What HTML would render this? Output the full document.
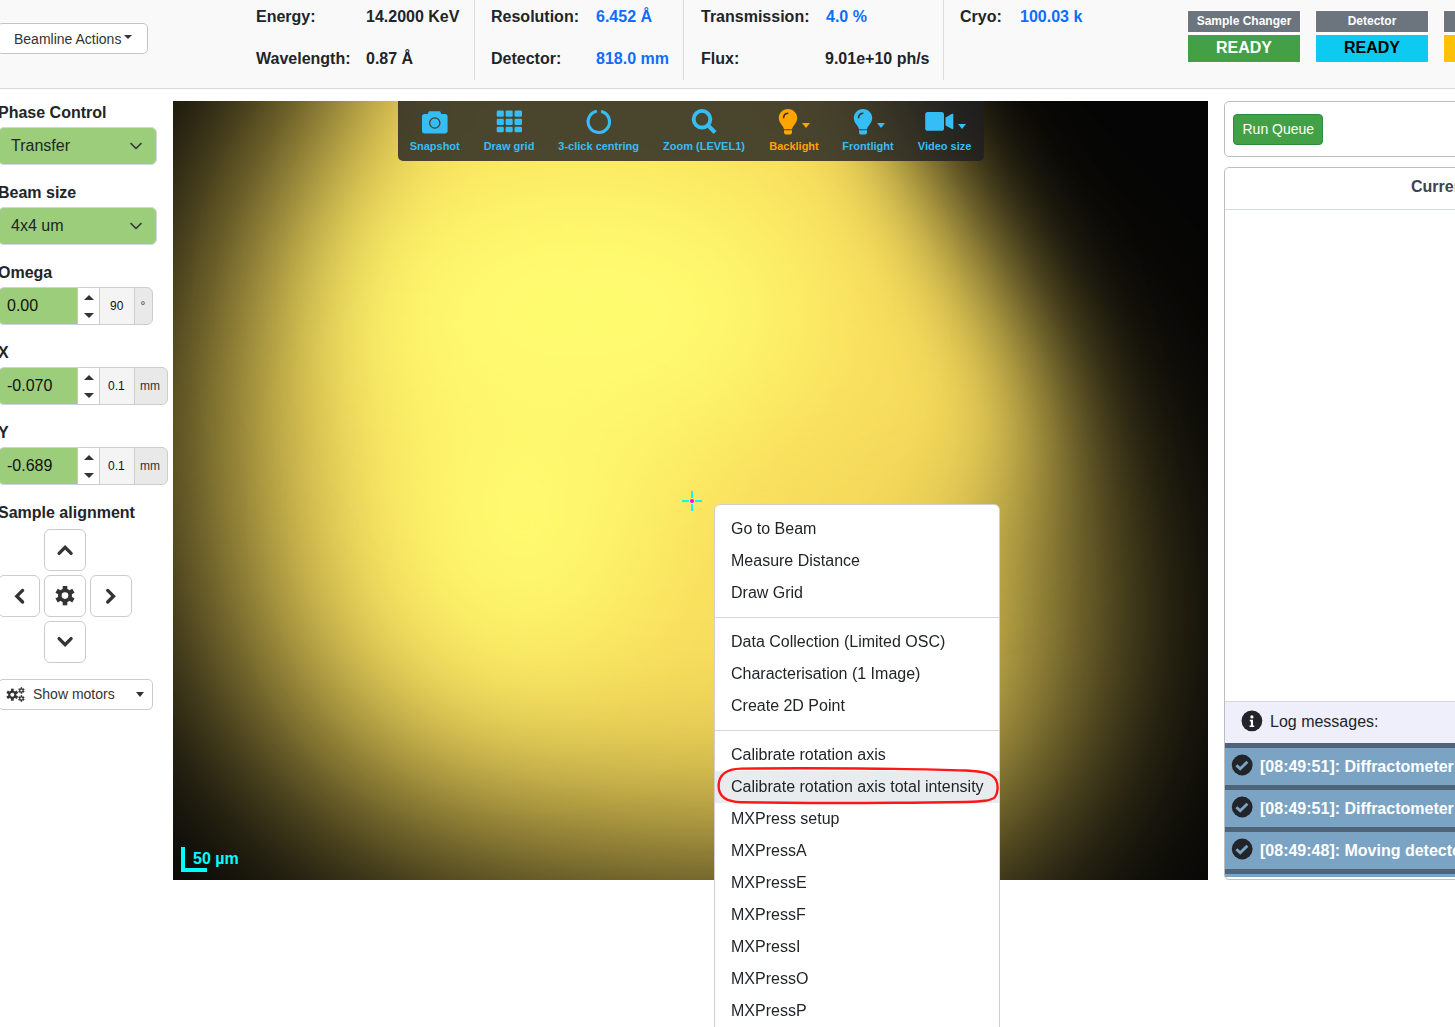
<!DOCTYPE html>
<html><head><meta charset="utf-8">
<style>
*{box-sizing:border-box;margin:0;padding:0}
html,body{width:1455px;height:1027px;overflow:hidden;background:#fff}
body{position:relative;font-family:"Liberation Sans",sans-serif;color:#212529}
.a{position:absolute}
.t{position:absolute;white-space:nowrap;line-height:1}
.b{font-weight:bold}
.blue{color:#0d6efd}
#hdr{left:0;top:0;width:1455px;height:89px;background:#f9f9f9;border-bottom:1px solid #d9d9d9}
.vdiv{position:absolute;top:0;width:1px;height:80px;background:#dcdcdc}
.lbl16{font-size:16px;font-weight:bold}
.sel{left:-2px;width:159px;height:38px;background:#9bcd7b;border:1px solid #d3d6dc;border-radius:6px}
.ig{left:-2px;height:38px;border-radius:6px}
.igin{left:-2px;width:80px;height:38px;background:#9bcd7b;border:1px solid #cfd2da;border-right-color:#c8c8c8;border-radius:6px 0 0 6px}
.spin{left:78px;width:22px;height:38px;background:#fff;border-top:1px solid #cdcdcd;border-bottom:1px solid #cdcdcd;border-right:1px solid #cdcdcd}
.step{left:99px;width:36px;height:38px;background:#f4f4f4;border:1px solid #cdcdcd}
.unit{left:134px;height:38px;background:#e9e9e9;border:1px solid #cdcdcd;border-radius:0 6px 6px 0}
.up{width:0;height:0;border-bottom:5px solid #333;border-left:5px solid transparent;border-right:5px solid transparent}
.dn{width:0;height:0;border-top:5px solid #333;border-left:5px solid transparent;border-right:5px solid transparent}
.abtn{width:42px;height:42px;border:1px solid #ccc;border-radius:6px;background:#fff}
.tbl{top:141px;width:100px;text-align:center;font-size:11px;color:#35bef6}
.logi{left:0;width:260px;height:42px;background:#7ba3c4;border-top:5px solid #4f6478}
.mi{left:731px;font-size:16px;color:#212529}
</style></head><body>
<!-- HEADER -->
<div id="hdr" class="a"></div>
<div class="a" style="left:-3px;top:23px;width:151px;height:31px;border:1px solid #c4c4c4;border-radius:5px;background:#fff"></div>
<div class="t" style="left:14px;top:32px;font-size:14px;color:#333">Beamline Actions</div>
<div class="a" style="left:124px;top:35px;width:0;height:0;border-top:4px solid #333;border-left:4px solid transparent;border-right:4px solid transparent"></div>

<div class="t lbl16" style="left:256px;top:9px">Energy:</div>
<div class="t lbl16" style="left:366px;top:9px">14.2000 KeV</div>
<div class="t lbl16" style="left:256px;top:51px">Wavelength:</div>
<div class="t lbl16" style="left:366px;top:51px">0.87 Å</div>
<div class="vdiv" style="left:474px"></div>
<div class="t lbl16" style="left:491px;top:9px">Resolution:</div>
<div class="t lbl16 blue" style="left:596px;top:9px">6.452 Å</div>
<div class="t lbl16" style="left:491px;top:51px">Detector:</div>
<div class="t lbl16 blue" style="left:596px;top:51px">818.0 mm</div>
<div class="vdiv" style="left:683px"></div>
<div class="t lbl16" style="left:701px;top:9px">Transmission:</div>
<div class="t lbl16 blue" style="left:826px;top:9px">4.0 %</div>
<div class="t lbl16" style="left:701px;top:51px">Flux:</div>
<div class="t lbl16" style="left:825px;top:51px">9.01e+10 ph/s</div>
<div class="vdiv" style="left:943px"></div>
<div class="t lbl16" style="left:960px;top:9px">Cryo:</div>
<div class="t lbl16 blue" style="left:1020px;top:9px">100.03 k</div>

<div class="a" style="left:1187px;top:10px;width:114px;height:53px;background:#fff"></div>
<div class="a" style="left:1188px;top:11px;width:112px;height:21px;background:#6c757d"></div>
<div class="t b" style="left:1188px;top:15px;width:112px;text-align:center;font-size:12px;color:#fff">Sample Changer</div>
<div class="a" style="left:1188px;top:35px;width:112px;height:27px;background:#43a047"></div>
<div class="t b" style="left:1188px;top:40px;width:112px;text-align:center;font-size:16px;color:#fff">READY</div>

<div class="a" style="left:1315px;top:10px;width:114px;height:53px;background:#fff"></div>
<div class="a" style="left:1316px;top:11px;width:112px;height:21px;background:#6c757d"></div>
<div class="t b" style="left:1316px;top:15px;width:112px;text-align:center;font-size:12px;color:#fff">Detector</div>
<div class="a" style="left:1316px;top:35px;width:112px;height:27px;background:#0dcaf0"></div>
<div class="t b" style="left:1316px;top:40px;width:112px;text-align:center;font-size:16px;color:#000">READY</div>

<div class="a" style="left:1443px;top:10px;width:20px;height:53px;background:#fff"></div>
<div class="a" style="left:1444px;top:11px;width:20px;height:21px;background:#6c757d"></div>
<div class="a" style="left:1444px;top:35px;width:20px;height:27px;background:#ffc107"></div>

<!-- LEFT PANEL -->
<div class="t lbl16" style="left:-2px;top:105px">Phase Control</div>
<div class="a sel" style="top:127px"></div>
<div class="t" style="left:11px;top:138px;font-size:16px">Transfer</div>
<svg class="a" style="left:128px;top:140px" width="16" height="12" viewBox="0 0 16 12"><path d="M3 3.5l5 5 5-5" fill="none" stroke="#343a40" stroke-width="1.7" stroke-linecap="round" stroke-linejoin="round"/></svg>
<div class="t lbl16" style="left:-2px;top:185px">Beam size</div>
<div class="a sel" style="top:207px"></div>
<div class="t" style="left:11px;top:218px;font-size:16px">4x4 um</div>
<svg class="a" style="left:128px;top:220px" width="16" height="12" viewBox="0 0 16 12"><path d="M3 3.5l5 5 5-5" fill="none" stroke="#343a40" stroke-width="1.7" stroke-linecap="round" stroke-linejoin="round"/></svg>

<div class="t lbl16" style="left:-2px;top:265px">Omega</div>
<div class="a ig" style="top:287px;width:155px"></div>
<div class="a igin" style="top:287px"></div>
<div class="t" style="left:7px;top:298px;font-size:16px;color:#111">0.00</div>
<div class="a spin" style="top:287px"></div>
<div class="a up" style="left:84px;top:295px"></div><div class="a dn" style="left:84px;top:313px"></div>
<div class="a step" style="top:287px"></div>
<div class="t" style="left:110px;top:300px;font-size:12px;color:#111">90</div>
<div class="a unit" style="top:287px;width:19px"></div>
<div class="t" style="left:140.5px;top:300px;font-size:12px;color:#333">°</div>

<div class="t lbl16" style="left:-2px;top:345px">X</div>
<div class="a ig" style="top:367px;width:170px"></div>
<div class="a igin" style="top:367px"></div>
<div class="t" style="left:7px;top:378px;font-size:16px;color:#111">-0.070</div>
<div class="a spin" style="top:367px"></div>
<div class="a up" style="left:84px;top:375px"></div><div class="a dn" style="left:84px;top:393px"></div>
<div class="a step" style="top:367px"></div>
<div class="t" style="left:108px;top:380px;font-size:12px;color:#111">0.1</div>
<div class="a unit" style="top:367px;width:34px"></div>
<div class="t" style="left:140px;top:380px;font-size:12px;color:#333">mm</div>

<div class="t lbl16" style="left:-2px;top:425px">Y</div>
<div class="a ig" style="top:447px;width:170px"></div>
<div class="a igin" style="top:447px"></div>
<div class="t" style="left:7px;top:458px;font-size:16px;color:#111">-0.689</div>
<div class="a spin" style="top:447px"></div>
<div class="a up" style="left:84px;top:455px"></div><div class="a dn" style="left:84px;top:473px"></div>
<div class="a step" style="top:447px"></div>
<div class="t" style="left:108px;top:460px;font-size:12px;color:#111">0.1</div>
<div class="a unit" style="top:447px;width:34px"></div>
<div class="t" style="left:140px;top:460px;font-size:12px;color:#333">mm</div>

<div class="t lbl16" style="left:-2px;top:505px">Sample alignment</div>
<div class="a abtn" style="left:44px;top:529px"></div>
<div class="a abtn" style="left:-2px;top:575px"></div>
<div class="a abtn" style="left:44px;top:575px"></div>
<div class="a abtn" style="left:90px;top:575px"></div>
<div class="a abtn" style="left:44px;top:621px"></div>
<svg class="a" style="left:56px;top:543px" width="18" height="14" viewBox="0 0 18 14"><path d="M3.1 10.4L9.1 4.4 15.1 10.4" fill="none" stroke="#333" stroke-width="3.3" stroke-linecap="round"/></svg>
<svg class="a" style="left:56px;top:635px" width="18" height="14" viewBox="0 0 18 14"><path d="M3.1 3.6L9.1 9.6 15.1 3.6" fill="none" stroke="#333" stroke-width="3.3" stroke-linecap="round"/></svg>
<svg class="a" style="left:12px;top:587px" width="14" height="18" viewBox="0 0 14 18"><path d="M10.6 3.4L4.8 9.2 10.6 15" fill="none" stroke="#333" stroke-width="3.3" stroke-linecap="round"/></svg>
<svg class="a" style="left:104px;top:587px" width="14" height="18" viewBox="0 0 14 18"><path d="M3.7 3.4L9.5 9.2 3.7 15" fill="none" stroke="#333" stroke-width="3.3" stroke-linecap="round"/></svg>
<svg class="a" style="left:55px;top:586px" width="20" height="20" viewBox="0 0 20 20"><circle cx="10" cy="9.6" r="7.0" fill="#333"/><rect x="7.7" y="-0.09999999999999964" width="4.6" height="4.199999999999999" fill="#333" transform="rotate(0 10 9.6)"/><rect x="7.7" y="-0.09999999999999964" width="4.6" height="4.199999999999999" fill="#333" transform="rotate(60 10 9.6)"/><rect x="7.7" y="-0.09999999999999964" width="4.6" height="4.199999999999999" fill="#333" transform="rotate(120 10 9.6)"/><rect x="7.7" y="-0.09999999999999964" width="4.6" height="4.199999999999999" fill="#333" transform="rotate(180 10 9.6)"/><rect x="7.7" y="-0.09999999999999964" width="4.6" height="4.199999999999999" fill="#333" transform="rotate(240 10 9.6)"/><rect x="7.7" y="-0.09999999999999964" width="4.6" height="4.199999999999999" fill="#333" transform="rotate(300 10 9.6)"/><circle cx="10" cy="9.6" r="3.3" fill="#fff"/></svg>

<div class="a" style="left:-2px;top:679px;width:155px;height:31px;border:1px solid #ccc;border-radius:5px;background:#fff"></div>
<svg class="a" style="left:6px;top:687px" width="20" height="16" viewBox="0 0 20 16"><circle cx="6.3" cy="7.7" r="4.0" fill="#333"/><rect x="4.9" y="1.7000000000000002" width="2.8" height="3.5" fill="#333" transform="rotate(0 6.3 7.7)"/><rect x="4.9" y="1.7000000000000002" width="2.8" height="3.5" fill="#333" transform="rotate(60 6.3 7.7)"/><rect x="4.9" y="1.7000000000000002" width="2.8" height="3.5" fill="#333" transform="rotate(120 6.3 7.7)"/><rect x="4.9" y="1.7000000000000002" width="2.8" height="3.5" fill="#333" transform="rotate(180 6.3 7.7)"/><rect x="4.9" y="1.7000000000000002" width="2.8" height="3.5" fill="#333" transform="rotate(240 6.3 7.7)"/><rect x="4.9" y="1.7000000000000002" width="2.8" height="3.5" fill="#333" transform="rotate(300 6.3 7.7)"/><circle cx="6.3" cy="7.7" r="2.0" fill="#fff"/><circle cx="15.4" cy="3.5" r="2.2" fill="#333"/><rect x="14.65" y="0.20000000000000018" width="1.5" height="2.5999999999999996" fill="#333" transform="rotate(0 15.4 3.5)"/><rect x="14.65" y="0.20000000000000018" width="1.5" height="2.5999999999999996" fill="#333" transform="rotate(60 15.4 3.5)"/><rect x="14.65" y="0.20000000000000018" width="1.5" height="2.5999999999999996" fill="#333" transform="rotate(120 15.4 3.5)"/><rect x="14.65" y="0.20000000000000018" width="1.5" height="2.5999999999999996" fill="#333" transform="rotate(180 15.4 3.5)"/><rect x="14.65" y="0.20000000000000018" width="1.5" height="2.5999999999999996" fill="#333" transform="rotate(240 15.4 3.5)"/><rect x="14.65" y="0.20000000000000018" width="1.5" height="2.5999999999999996" fill="#333" transform="rotate(300 15.4 3.5)"/><circle cx="15.4" cy="3.5" r="1.1" fill="#fff"/><circle cx="15.4" cy="11.5" r="2.2" fill="#333"/><rect x="14.65" y="8.2" width="1.5" height="2.5999999999999996" fill="#333" transform="rotate(0 15.4 11.5)"/><rect x="14.65" y="8.2" width="1.5" height="2.5999999999999996" fill="#333" transform="rotate(60 15.4 11.5)"/><rect x="14.65" y="8.2" width="1.5" height="2.5999999999999996" fill="#333" transform="rotate(120 15.4 11.5)"/><rect x="14.65" y="8.2" width="1.5" height="2.5999999999999996" fill="#333" transform="rotate(180 15.4 11.5)"/><rect x="14.65" y="8.2" width="1.5" height="2.5999999999999996" fill="#333" transform="rotate(240 15.4 11.5)"/><rect x="14.65" y="8.2" width="1.5" height="2.5999999999999996" fill="#333" transform="rotate(300 15.4 11.5)"/><circle cx="15.4" cy="11.5" r="1.1" fill="#fff"/></svg>
<div class="t" style="left:33px;top:687px;font-size:14px;color:#333">Show motors</div>
<div class="a" style="left:136px;top:692px;width:0;height:0;border-top:5px solid #333;border-left:4px solid transparent;border-right:4px solid transparent"></div>

<!-- VIDEO -->
<svg id="video" class="a" style="left:173px;top:101px" width="1035" height="779" viewBox="0 0 1035 779">
<defs>
<filter id="bl1" filterUnits="userSpaceOnUse" x="-400" y="-400" width="1835" height="1579"><feGaussianBlur stdDeviation="105"/></filter>
<filter id="bl3" filterUnits="userSpaceOnUse" x="-400" y="-400" width="1835" height="1579"><feGaussianBlur stdDeviation="62"/></filter>
<filter id="bl4" filterUnits="userSpaceOnUse" x="-400" y="-400" width="1835" height="1579"><feGaussianBlur stdDeviation="70"/></filter>
<filter id="bl2" filterUnits="userSpaceOnUse" x="-400" y="-400" width="1835" height="1579"><feGaussianBlur stdDeviation="70"/></filter>
</defs>
<rect width="1035" height="779" fill="#050505"/>
<polygon points="260,-250 520,-250 640,100 780,250 870,340 890,440 900,560 875,660 820,730 700,775 527,772 280,750 150,680 85,600 48,500 32,380 35,240 95,60 190,-60" fill="#f8dc5c" filter="url(#bl1)"/>
<polygon points="250,-200 660,-200 710,0 744,62 822,194 855,300 860,380 700,440 400,440 250,250" fill="#f8dc5c" filter="url(#bl3)"/>
<ellipse cx="410" cy="210" rx="235" ry="150" fill="#fffc70" filter="url(#bl2)"/>
<ellipse cx="350" cy="420" rx="130" ry="150" fill="#fffc70" filter="url(#bl2)"/>
</svg>

<!-- TOOLBAR -->
<div class="a" style="left:398px;top:101px;width:586px;height:60px;background:rgba(30,30,32,0.8);border-radius:0 0 5px 5px"></div>
<svg class="a" style="left:421px;top:110px" width="27" height="24" viewBox="0 0 27 24"><path d="M8 1.2h11l1.4 2.8H24c1.7 0 2.6 0.9 2.6 2.6v14.2c0 1.7-0.9 2.6-2.6 2.6H3.6C1.9 23.4 1 22.5 1 20.8V6.6C1 4.9 1.9 4 3.6 4h3z" fill="#35bef6"/><circle cx="13.8" cy="13" r="5.1" fill="none" stroke="#433d2c" stroke-width="1.3"/></svg>
<svg class="a" style="left:496px;top:110px" width="27" height="23" viewBox="0 0 27 23"><g fill="#35bef6"><rect x="0.7" y="0.5" width="7.1" height="6.3" rx="1.3"/><rect x="9.6" y="0.5" width="7.1" height="6.3" rx="1.3"/><rect x="18.5" y="0.5" width="7.5" height="6.3" rx="1.3"/><rect x="0.7" y="8.7" width="7.1" height="6.3" rx="1.3"/><rect x="9.6" y="8.7" width="7.1" height="6.3" rx="1.3"/><rect x="18.5" y="8.7" width="7.5" height="6.3" rx="1.3"/><rect x="0.7" y="16.8" width="7.1" height="5.5" rx="1.3"/><rect x="9.6" y="16.8" width="7.1" height="5.5" rx="1.3"/><rect x="18.5" y="16.8" width="7.5" height="5.5" rx="1.3"/></g></svg>
<svg class="a" style="left:585px;top:108px" width="28" height="28" viewBox="0 0 28 28"><path d="M10.65 3.57A10.7 10.7 0 1 0 17.35 3.7" fill="none" stroke="#35bef6" stroke-width="3.1" stroke-linecap="round"/></svg>
<svg class="a" style="left:690px;top:107px" width="28" height="28" viewBox="0 0 28 28"><circle cx="12" cy="12.2" r="8.3" fill="none" stroke="#35bef6" stroke-width="3.9"/><path d="M17.6 18l7.5 7.5" stroke="#35bef6" stroke-width="3.9" stroke-linecap="butt"/></svg>
<svg class="a" style="left:778px;top:108px" width="20" height="27" viewBox="0 0 20 27"><path d="M10 0.9C4.9 0.9 0.8 4.9 0.8 10c0 2.6 1.1 4.6 2.6 6.4c1.3 1.6 2.3 3.2 2.6 4.8h8c0.3-1.6 1.3-3.2 2.6-4.8c1.5-1.8 2.6-3.8 2.6-6.4C19.2 4.9 15.1 0.9 10 0.9z" fill="#ffa500"/><path d="M5.6 9.6a4.8 4.8 0 0 1 4.2-4.4" fill="none" stroke="#3a3526" stroke-width="1.6" stroke-linecap="round"/><path d="M6 22.3h8v1.6c0 1.6-1 2.6-2.4 2.6h-3.2c-1.4 0-2.4-1-2.4-2.6z" fill="#ffa500"/></svg>
<div class="a" style="left:802px;top:123px;width:0;height:0;border-top:5px solid #ffa500;border-left:4.7px solid transparent;border-right:4.7px solid transparent"></div>
<svg class="a" style="left:853px;top:108px" width="20" height="27" viewBox="0 0 20 27"><path d="M10 0.9C4.9 0.9 0.8 4.9 0.8 10c0 2.6 1.1 4.6 2.6 6.4c1.3 1.6 2.3 3.2 2.6 4.8h8c0.3-1.6 1.3-3.2 2.6-4.8c1.5-1.8 2.6-3.8 2.6-6.4C19.2 4.9 15.1 0.9 10 0.9z" fill="#35bef6"/><path d="M5.6 9.6a4.8 4.8 0 0 1 4.2-4.4" fill="none" stroke="#3a3526" stroke-width="1.6" stroke-linecap="round"/><path d="M6 22.3h8v1.6c0 1.6-1 2.6-2.4 2.6h-3.2c-1.4 0-2.4-1-2.4-2.6z" fill="#35bef6"/></svg>
<div class="a" style="left:876.5px;top:123px;width:0;height:0;border-top:5px solid #35bef6;border-left:4.7px solid transparent;border-right:4.7px solid transparent"></div>
<svg class="a" style="left:924px;top:111px" width="31" height="21" viewBox="0 0 31 21"><rect x="1.2" y="1" width="18.8" height="18.8" rx="2.6" fill="#35bef6"/><path d="M21.5 6.4L28 2.8c0.8-0.4 1.3 0 1.3 0.8v13.6c0 0.8-0.5 1.2-1.3 0.8L21.5 14.6z" fill="#35bef6"/></svg>
<div class="a" style="left:958px;top:124px;width:0;height:0;border-top:5px solid #35bef6;border-left:4.5px solid transparent;border-right:4.5px solid transparent"></div>
<div class="t b tbl" style="left:384.7px">Snapshot</div>
<div class="t b tbl" style="left:459px">Draw grid</div>
<div class="t b tbl" style="left:548.7px">3-click centring</div>
<div class="t b tbl" style="left:654px">Zoom (LEVEL1)</div>
<div class="t b tbl" style="left:744px;color:#ffa500">Backlight</div>
<div class="t b tbl" style="left:818px">Frontlight</div>
<div class="t b tbl" style="left:894.6px">Video size</div>

<!-- RIGHT PANEL -->
<div class="a" style="left:1224px;top:101px;width:260px;height:56px;border:1px solid #bdbdbd;border-radius:5px;background:#fff"></div>
<div class="a" style="left:1233px;top:114px;width:90px;height:31px;background:#43a047;border:1px solid #2e8b3e;border-radius:4px"></div>
<div class="t" style="left:1242.5px;top:122px;font-size:14px;color:#fff">Run Queue</div>
<div class="a" style="left:1224px;top:167px;width:260px;height:713px;border:1px solid #bdbdbd;border-radius:5px;background:#fff;overflow:hidden">
  <div class="a" style="left:0;top:0;width:260px;height:42px;border-bottom:1px solid #d6dbe1"></div>
  <div class="a" style="left:0;top:533px;width:260px;height:42px;background:#efeefb;border-top:1px solid #d8d8d8"></div>
  <div class="a logi" style="top:575px"></div>
  <div class="a logi" style="top:617px"></div>
  <div class="a logi" style="top:659px"></div>
  <div class="a" style="left:0;top:701px;width:260px;height:5px;background:#4f6478"></div>
  <div class="a" style="left:0;top:706px;width:260px;height:3px;background:#7ba3c4"></div>
</div>
<div class="t b" style="left:1411px;top:179px;font-size:16px;color:#3b4550">Currently</div>
<svg class="a" style="left:1241px;top:710px" width="22" height="22" viewBox="0 0 22 22"><circle cx="10.9" cy="10.8" r="10.4" fill="#212529"/><circle cx="10.9" cy="6.9" r="1.6" fill="#fff"/><path d="M8.8 9.8h3.2v5.6h1.2v1.7H8.6v-1.7h1.3v-3.9H8.8z" fill="#fff"/></svg>
<div class="t" style="left:1270px;top:714px;font-size:16px;color:#212529">Log messages:</div>
<svg class="a" style="left:1231px;top:753.9px" width="22" height="22" viewBox="0 0 22 22"><circle cx="11.2" cy="11" r="10.4" fill="#212529"/><path d="M5.4 11.2l3.8 3.6 7.2-7.0" fill="none" stroke="#7ba3c4" stroke-width="2.9"/></svg>
<div class="t b" style="left:1260px;top:759px;font-size:16px;color:#fff">[08:49:51]: Diffractometer</div>
<svg class="a" style="left:1231px;top:795.9px" width="22" height="22" viewBox="0 0 22 22"><circle cx="11.2" cy="11" r="10.4" fill="#212529"/><path d="M5.4 11.2l3.8 3.6 7.2-7.0" fill="none" stroke="#7ba3c4" stroke-width="2.9"/></svg>
<div class="t b" style="left:1260px;top:801px;font-size:16px;color:#fff">[08:49:51]: Diffractometer</div>
<svg class="a" style="left:1231px;top:837.9px" width="22" height="22" viewBox="0 0 22 22"><circle cx="11.2" cy="11" r="10.4" fill="#212529"/><path d="M5.4 11.2l3.8 3.6 7.2-7.0" fill="none" stroke="#7ba3c4" stroke-width="2.9"/></svg>
<div class="t b" style="left:1260px;top:843px;font-size:16px;color:#fff">[08:49:48]: Moving detector</div>

<!-- CROSSHAIR + SCALEBAR -->
<div class="a" style="left:682px;top:500px;width:7px;height:2px;background:#00ffff"></div>
<div class="a" style="left:695px;top:500px;width:7px;height:2px;background:#00ffff"></div>
<div class="a" style="left:691px;top:491px;width:2px;height:7px;background:#00ffff"></div>
<div class="a" style="left:691px;top:504px;width:2px;height:7px;background:#00ffff"></div>
<div class="a" style="left:690px;top:499px;width:4px;height:4px;border-radius:2px;background:#ff00ff"></div>
<div class="a" style="left:181px;top:847px;width:4px;height:25px;background:#00ffff"></div>
<div class="a" style="left:181px;top:868px;width:26px;height:4px;background:#00ffff"></div>
<div class="t b" style="left:193px;top:851px;font-size:16px;color:#00ffff">50 µm</div>
<!-- MENU -->
<div class="a" style="left:0;top:0;width:1455px;height:1027px;will-change:transform">
<div class="a" style="left:714px;top:504px;width:286px;height:560px;background:#fff;border:1px solid #cfcfcf;border-radius:6px"></div>
<div class="a" style="left:715px;top:617px;width:284px;height:1px;background:#d6d6d6"></div>
<div class="a" style="left:715px;top:730px;width:284px;height:1px;background:#d6d6d6"></div>
<div class="a" style="left:715px;top:771px;width:284px;height:32px;background:#e9ecef"></div>
<div class="t mi" style="top:521px">Go to Beam</div>
<div class="t mi" style="top:553px">Measure Distance</div>
<div class="t mi" style="top:585px">Draw Grid</div>
<div class="t mi" style="top:634px">Data Collection (Limited OSC)</div>
<div class="t mi" style="top:666px">Characterisation (1 Image)</div>
<div class="t mi" style="top:698px">Create 2D Point</div>
<div class="t mi" style="top:747px">Calibrate rotation axis</div>
<div class="t mi" style="top:779px">Calibrate rotation axis total intensity</div>
<div class="t mi" style="top:811px">MXPress setup</div>
<div class="t mi" style="top:843px">MXPressA</div>
<div class="t mi" style="top:875px">MXPressE</div>
<div class="t mi" style="top:907px">MXPressF</div>
<div class="t mi" style="top:939px">MXPressI</div>
<div class="t mi" style="top:971px">MXPressO</div>
<div class="t mi" style="top:1003px">MXPressP</div>
<svg class="a" style="left:716px;top:764px" width="286" height="44" viewBox="0 0 286 44"><path d="M25 4.6C90 3.8 200 4.5 250 6.5C268 7.5 276 9.5 280 16C282.5 21 282 29 279 33C275 37 266 37.5 250 38C180 39 90 39.5 25 38.2C9 37.8 2.6 32 2.6 22C2.6 12 8 5 25 4.6z" fill="none" stroke="#ff1616" stroke-width="2.4"/></svg>
</div>
</body></html>
